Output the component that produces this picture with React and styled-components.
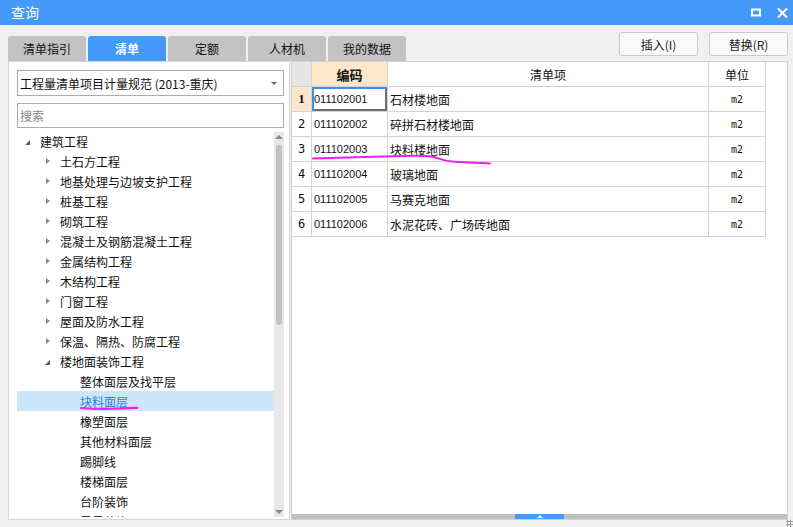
import React from "react";
import styled, { createGlobalStyle } from "styled-components";

const Global = createGlobalStyle`
  html, body { margin: 0; padding: 0; background: #f0f0f0; }
  body { font-family: "Noto Sans CJK SC", "Liberation Sans", sans-serif; }
`;

const Window = styled.div`
  width: 793px;
  height: 527px;
  background: #f0f0f0;
  display: flex;
  flex-direction: column;
  overflow: hidden;
  position: relative;
`;

const TitleBar = styled.div`
  height: 25px;
  background: #4599f8;
  display: flex;
  align-items: center;
  padding: 0 5px 0 11px;
  color: #fff;
`;
const Title = styled.div`
  font-size: 14px;
  flex: 1;
  line-height: 25px;
`;
const TitleIcons = styled.div`
  display: flex;
  align-items: center;
  gap: 16px;
`;

const Body = styled.div`
  flex: 1;
  display: flex;
  flex-direction: column;
  padding: 0 5px 0 8px;
`;

const TopRow = styled.div`
  height: 36px;
  display: flex;
  align-items: flex-end;
`;
const Tabs = styled.div`
  display: flex;
  gap: 2px;
  flex: 1;
`;
const Tab = styled.div`
  width: 78px;
  height: 25px;
  border-radius: 3px 3px 0 0;
  background: ${(p) => (p.$active ? "#4599f8" : "#c3c3c3")};
  color: ${(p) => (p.$active ? "#fff" : "#111")};
  font-weight: ${(p) => (p.$active ? "bold" : "normal")};
  font-size: 12px;
  display: flex;
  align-items: center;
  justify-content: center;
`;
const Buttons = styled.div`
  display: flex;
  gap: 11px;
  align-self: flex-start;
  margin-top: 7px;
`;
const Button = styled.div`
  width: 77px;
  height: 22px;
  border: 1px solid #c9c9c9;
  border-radius: 3px;
  background: #f9f9f9;
  font-size: 12px;
  color: #222;
  display: flex;
  align-items: center;
  justify-content: center;
`;

const Main = styled.div`
  height: 459px;
  display: flex;
  gap: 1px;
`;

const LeftPanel = styled.div`
  width: 267px;
  flex: none;
  border: 1px solid #d6d6d6;
  background: #fff;
  padding: 8px 5px 2px 8px;
  display: flex;
  flex-direction: column;
  box-sizing: content-box;
  height: 447px;
`;
const Select = styled.div`
  height: 24px;
  border: 1px solid #adadad;
  display: flex;
  align-items: center;
  padding: 0 6px 0 2px;
  font-size: 12px;
  color: #111;
`;
const SelectText = styled.div`
  flex: 1;
  white-space: nowrap;
`;
const Caret = styled.div`
  width: 0;
  height: 0;
  border-left: 3px solid transparent;
  border-right: 3px solid transparent;
  border-top: 3px solid #666;
`;
const Search = styled.div`
  margin-top: 7px;
  height: 23px;
  border: 1px solid #adadad;
  font-size: 12px;
  color: #888;
  display: flex;
  align-items: center;
  padding-left: 2px;
`;
const TreeWrap = styled.div`
  margin-top: 4px;
  flex: 1;
  display: flex;
  overflow: hidden;
  position: relative;
`;
const TreeList = styled.div`
  flex: 1;
  overflow: hidden;
  padding-top: 0;
  margin-top: -1px;
`;
const TreeRow = styled.div`
  height: 20px;
  display: flex;
  align-items: center;
  padding-left: ${(p) => 8 + p.$level * 20}px;
  font-size: 12px;
  white-space: nowrap;
  background: ${(p) => (p.$selected ? "#cce5f8" : "transparent")};
  color: ${(p) => (p.$selected ? "#1f7ee3" : "#111")};
`;
const Toggle = styled.div`
  width: 15px;
  height: 20px;
  display: flex;
  align-items: center;
`;
const Collapsed = styled.div`
  width: 0;
  height: 0;
  margin-left: 1px;
  border-top: 3.5px solid transparent;
  border-bottom: 3.5px solid transparent;
  border-left: 4px solid #8a8a8a;
`;
const Expanded = styled.div`
  width: 0;
  height: 0;
  margin-top: 2px;
  border-left: 5px solid transparent;
  border-bottom: 5px solid #5e5e5e;
`;

const VScroll = styled.div`
  width: 10px;
  background: #e8e8e8;
  display: flex;
  flex-direction: column;
  align-items: center;
`;
const ArrowUp = styled.div`
  width: 0;
  height: 0;
  margin-top: 3px;
  border-left: 4px solid transparent;
  border-right: 4px solid transparent;
  border-bottom: 4px solid #888;
`;
const ArrowDown = styled.div`
  width: 0;
  height: 0;
  margin-bottom: 3px;
  border-left: 4px solid transparent;
  border-right: 4px solid transparent;
  border-top: 4px solid #888;
`;
const Thumb = styled.div`
  width: 6px;
  height: 180px;
  margin-top: 6px;
  border-radius: 3px;
  background: #c2c2c2;
`;
const Spacer = styled.div`
  flex: 1;
`;

const RightPanel = styled.div`
  flex: 1;
  border: 1px solid #d0d0d0;
  background: #fff;
  display: flex;
  flex-direction: column;
  position: relative;
`;
const Grid = styled.div`
  flex: 1;
`;
const Row = styled.div`
  display: grid;
  grid-template-columns: 20px 76px 321px 57px;
  height: 25px;
`;
const Cell = styled.div`
  box-sizing: border-box;
  border-right: 1px solid #d4d4d4;
  border-bottom: 1px solid #d4d4d4;
  display: flex;
  align-items: center;
  justify-content: ${(p) => p.$align || "flex-start"};
  padding-left: ${(p) => (p.$align ? 0 : 2)}px;
  font-size: ${(p) => p.$size || 12}px;
  font-family: ${(p) =>
    p.$mono
      ? '"DejaVu Sans Mono", monospace'
      : p.$latin
      ? '"Liberation Sans", sans-serif'
      : '"Noto Sans CJK SC", "Liberation Sans", sans-serif'};
  font-weight: ${(p) => (p.$bold ? "bold" : "normal")};
  background: ${(p) => p.$bg || "#fff"};
  color: #111;
  box-shadow: ${(p) =>
    p.$focus ? "inset 2px 2px 0 #3b8ff0, inset -2px -2px 0 #6f6f6f" : "none"};
`;
const HScroll = styled.div`
  height: 5px;
  background: #c0c0c0;
  display: flex;
  justify-content: center;
`;
const HThumb = styled.div`
  width: 49px;
  background: #4599f8;
  display: flex;
  align-items: center;
  justify-content: center;
`;
const HArrow = styled.div`
  width: 0;
  height: 0;
  border-left: 3px solid transparent;
  border-right: 3px solid transparent;
  border-bottom: 3px solid #fff;
`;

const Grip = styled.div`
  position: absolute;
  right: 0;
  bottom: 0;
  width: 7px;
  height: 7px;
  background: radial-gradient(circle, #a0a0a0 1px, transparent 1.2px) 0 0 / 3px 3px;
`;

const Mark = styled.svg`
  position: absolute;
  pointer-events: none;
  overflow: visible;
`;

const tree = [
  { t: "建筑工程", l: 0, s: "open" },
  { t: "土石方工程", l: 1, s: "closed" },
  { t: "地基处理与边坡支护工程", l: 1, s: "closed" },
  { t: "桩基工程", l: 1, s: "closed" },
  { t: "砌筑工程", l: 1, s: "closed" },
  { t: "混凝土及钢筋混凝土工程", l: 1, s: "closed" },
  { t: "金属结构工程", l: 1, s: "closed" },
  { t: "木结构工程", l: 1, s: "closed" },
  { t: "门窗工程", l: 1, s: "closed" },
  { t: "屋面及防水工程", l: 1, s: "closed" },
  { t: "保温、隔热、防腐工程", l: 1, s: "closed" },
  { t: "楼地面装饰工程", l: 1, s: "open" },
  { t: "整体面层及找平层", l: 2 },
  { t: "块料面层", l: 2, sel: true },
  { t: "橡塑面层", l: 2 },
  { t: "其他材料面层", l: 2 },
  { t: "踢脚线", l: 2 },
  { t: "楼梯面层", l: 2 },
  { t: "台阶装饰", l: 2 },
  { t: "零星装饰项目", l: 2 },
];

const rows = [
  ["011102001", "石材楼地面"],
  ["011102002", "碎拼石材楼地面"],
  ["011102003", "块料楼地面"],
  ["011102004", "玻璃地面"],
  ["011102005", "马赛克地面"],
  ["011102006", "水泥花砖、广场砖地面"],
];

export default function App() {
  return (
    <Window>
      <Global />
      <TitleBar>
        <Title>查询</Title>
        <TitleIcons>
          <svg width="10" height="9" viewBox="0 0 10 9">
            <rect x="1" y="1.5" width="8" height="6" fill="none" stroke="#fff" strokeWidth="2" />
          </svg>
          <svg width="11" height="10" viewBox="0 0 11 10">
            <path d="M1 0.5 L10 9.5 M10 0.5 L1 9.5" stroke="#fff" strokeWidth="2" />
          </svg>
        </TitleIcons>
      </TitleBar>
      <Body>
        <TopRow>
          <Tabs>
            <Tab>清单指引</Tab>
            <Tab $active>清单</Tab>
            <Tab>定额</Tab>
            <Tab>人材机</Tab>
            <Tab>我的数据</Tab>
          </Tabs>
          <Buttons>
            <Button>插入(I)</Button>
            <Button>替换(R)</Button>
          </Buttons>
        </TopRow>
        <Main>
          <LeftPanel>
            <Select>
              <SelectText>工程量清单项目计量规范 (2013-重庆)</SelectText>
              <Caret />
            </Select>
            <Search>搜索</Search>
            <TreeWrap>
              <TreeList>
                {tree.map((n, i) => (
                  <TreeRow key={i} $level={n.l} $selected={n.sel}>
                    <Toggle>
                      {n.s === "open" && <Expanded />}
                      {n.s === "closed" && <Collapsed />}
                    </Toggle>
                    {n.t}
                  </TreeRow>
                ))}
              </TreeList>
              <VScroll>
                <ArrowUp />
                <Thumb />
                <Spacer />
                <ArrowDown />
              </VScroll>
              <Mark width="60" height="6" style={{ left: 63, top: 273 }}>
                <path d="M1 3 Q20 4.5 40 3.5 T57 3" stroke="#f01cf0" strokeWidth="2.2" fill="none" strokeLinecap="round" />
              </Mark>
            </TreeWrap>
          </LeftPanel>
          <RightPanel>
            <Grid>
              <Row>
                <Cell $bg="#e6e6e6" />
                <Cell $bg="#fde6c9" $bold $align="center" $size={13}>编码</Cell>
                <Cell $align="center">清单项</Cell>
                <Cell $align="center">单位</Cell>
              </Row>
              {rows.map((r, i) => (
                <Row key={i}>
                  <Cell
                    $align="center"
                    $bg={i === 0 ? "#fde6c9" : "#fff"}
                    $bold={i === 0}
                    $mono={i !== 0}
                    $size={i === 0 ? 13 : 12}
                    style={i === 0 ? { fontFamily: '"Liberation Serif", serif' } : undefined}
                  >
                    {i + 1}
                  </Cell>
                  <Cell $latin $size={11} $focus={i === 0}>{r[0]}</Cell>
                  <Cell>{r[1]}</Cell>
                  <Cell $align="center" $mono $size={10}>m2</Cell>
                </Row>
              ))}
            </Grid>
            <HScroll>
              <HThumb>
                <HArrow />
              </HThumb>
            </HScroll>
            <Mark width="180" height="12" style={{ left: 20, top: 93 }}>
              <path
                d="M1 3.5 C20 3 45 2 80 1.2 C105 0.5 115 0.5 122 2 C128 4 132 6 140 6.5 C155 7.5 168 8 178 8.5"
                stroke="#f01cf0"
                strokeWidth="2"
                fill="none"
                strokeLinecap="round"
              />
            </Mark>
          </RightPanel>
        </Main>
      </Body>
      <Grip />
    </Window>
  );
}
